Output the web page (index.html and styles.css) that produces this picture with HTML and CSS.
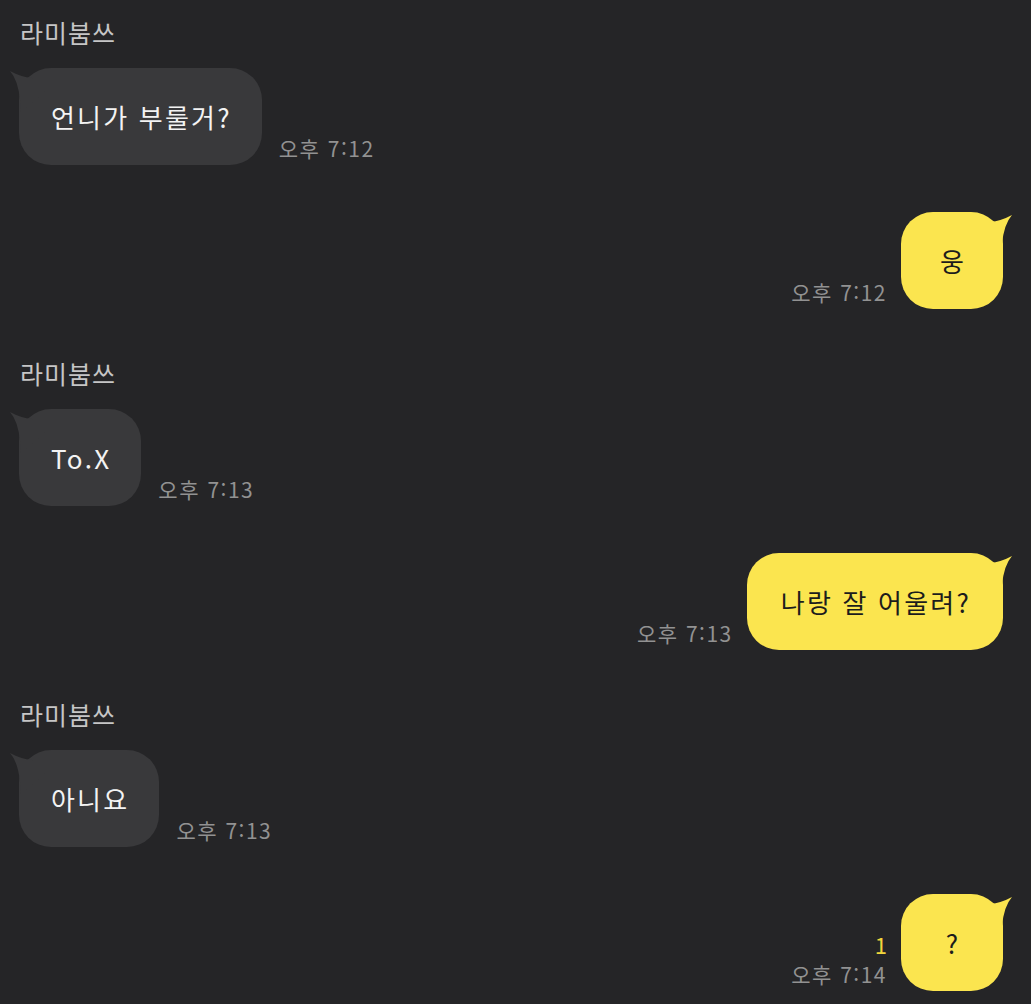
FILE: index.html
```html
<!DOCTYPE html>
<html lang="ko">
<head>
  <meta charset="UTF-8" />
  <meta name="viewport" content="width=device-width, initial-scale=1.0" />
  <title>라미붐쓰</title>
  <link rel="stylesheet" href="styles.css">
</head>
<body>
  <div class="chat">

    <div class="group">
      <div class="name">라미붐쓰</div>
      <div class="row">
        <div class="bubble">
          <svg class="tail" viewBox="0 0 40 45"><path d="M1 3 Q12 9 23 10 L36 24 L12 44 L11 32 Q9 12 1 3Z"/></svg>
          언니가 부룰거?
        </div>
        <div class="meta"><span class="time">오후 7:12</span></div>
      </div>
    </div>

    <div class="row me">
      <div class="meta"><span class="time">오후 7:12</span></div>
      <div class="bubble">
        <svg class="tail" viewBox="0 0 40 45"><path d="M1 3 Q12 9 23 10 L36 24 L12 44 L11 32 Q9 12 1 3Z"/></svg>
        웅
      </div>
    </div>

    <div class="group">
      <div class="name">라미붐쓰</div>
      <div class="row">
        <div class="bubble">
          <svg class="tail" viewBox="0 0 40 45"><path d="M1 3 Q12 9 23 10 L36 24 L12 44 L11 32 Q9 12 1 3Z"/></svg>
          To.X
        </div>
        <div class="meta"><span class="time">오후 7:13</span></div>
      </div>
    </div>

    <div class="row me">
      <div class="meta"><span class="time">오후 7:13</span></div>
      <div class="bubble">
        <svg class="tail" viewBox="0 0 40 45"><path d="M1 3 Q12 9 23 10 L36 24 L12 44 L11 32 Q9 12 1 3Z"/></svg>
        나랑 잘 어울려?
      </div>
    </div>

    <div class="group">
      <div class="name">라미붐쓰</div>
      <div class="row">
        <div class="bubble">
          <svg class="tail" viewBox="0 0 40 45"><path d="M1 3 Q12 9 23 10 L36 24 L12 44 L11 32 Q9 12 1 3Z"/></svg>
          아니요
        </div>
        <div class="meta"><span class="time">오후 7:13</span></div>
      </div>
    </div>

    <div class="row me">
      <div class="meta">
        <span class="unread">1</span>
        <span class="time">오후 7:14</span>
      </div>
      <div class="bubble">
        <svg class="tail" viewBox="0 0 40 45"><path d="M1 3 Q12 9 23 10 L36 24 L12 44 L11 32 Q9 12 1 3Z"/></svg>
        ?
      </div>
    </div>

  </div>
</body>
</html>
```

FILE: styles.css
```css
body {
  margin: 0;
  background: #252527;
  font-family: "Noto Sans CJK KR", "Noto Sans", sans-serif;
  height: 1004px;
  overflow: hidden;
}
.chat {
  padding: 17px 28px 0 19px;
}
.group {
  margin-top: 49px;
}
.group:first-child {
  margin-top: 0;
}
.name {
  font-size: 25px;
  line-height: 30px;
  letter-spacing: 1px;
  color: #c6c6c6;
  margin: 0 0 21px 1px;
}
.row {
  display: flex;
  align-items: flex-end;
  gap: 17px;
}
.row.me {
  justify-content: flex-end;
  margin-top: 47px;
  gap: 14px;
}
.bubble {
  position: relative;
  height: 97px;
  min-width: 102px;
  box-sizing: border-box;
  padding: 0 30px 0 32px;
  border-radius: 32px;
  background: #39393b;
  color: #f3f3f3;
  font-size: 26px;
  letter-spacing: 2.2px;
  display: flex;
  align-items: center;
  justify-content: center;
}
.tail {
  position: absolute;
  left: -10px;
  top: 0;
  width: 40px;
  height: 45px;
}
.tail path {
  fill: #39393b;
}
.me .bubble {
  background: #fbe54f;
  color: #1c1c1c;
  padding: 0 32px 0 34px;
}
.me .tail {
  left: auto;
  right: -10px;
  transform: scaleX(-1);
}
.me .tail path {
  fill: #fbe54f;
}
.meta {
  display: flex;
  flex-direction: column;
  align-items: flex-end;
  margin-bottom: 5px;
}
.time {
  font-size: 21px;
  line-height: 24px;
  letter-spacing: 1.5px;
  color: #929292;
}
.unread {
  font-size: 22px;
  line-height: 24px;
  color: #f1d63c;
  margin-bottom: 6px;
}
```
